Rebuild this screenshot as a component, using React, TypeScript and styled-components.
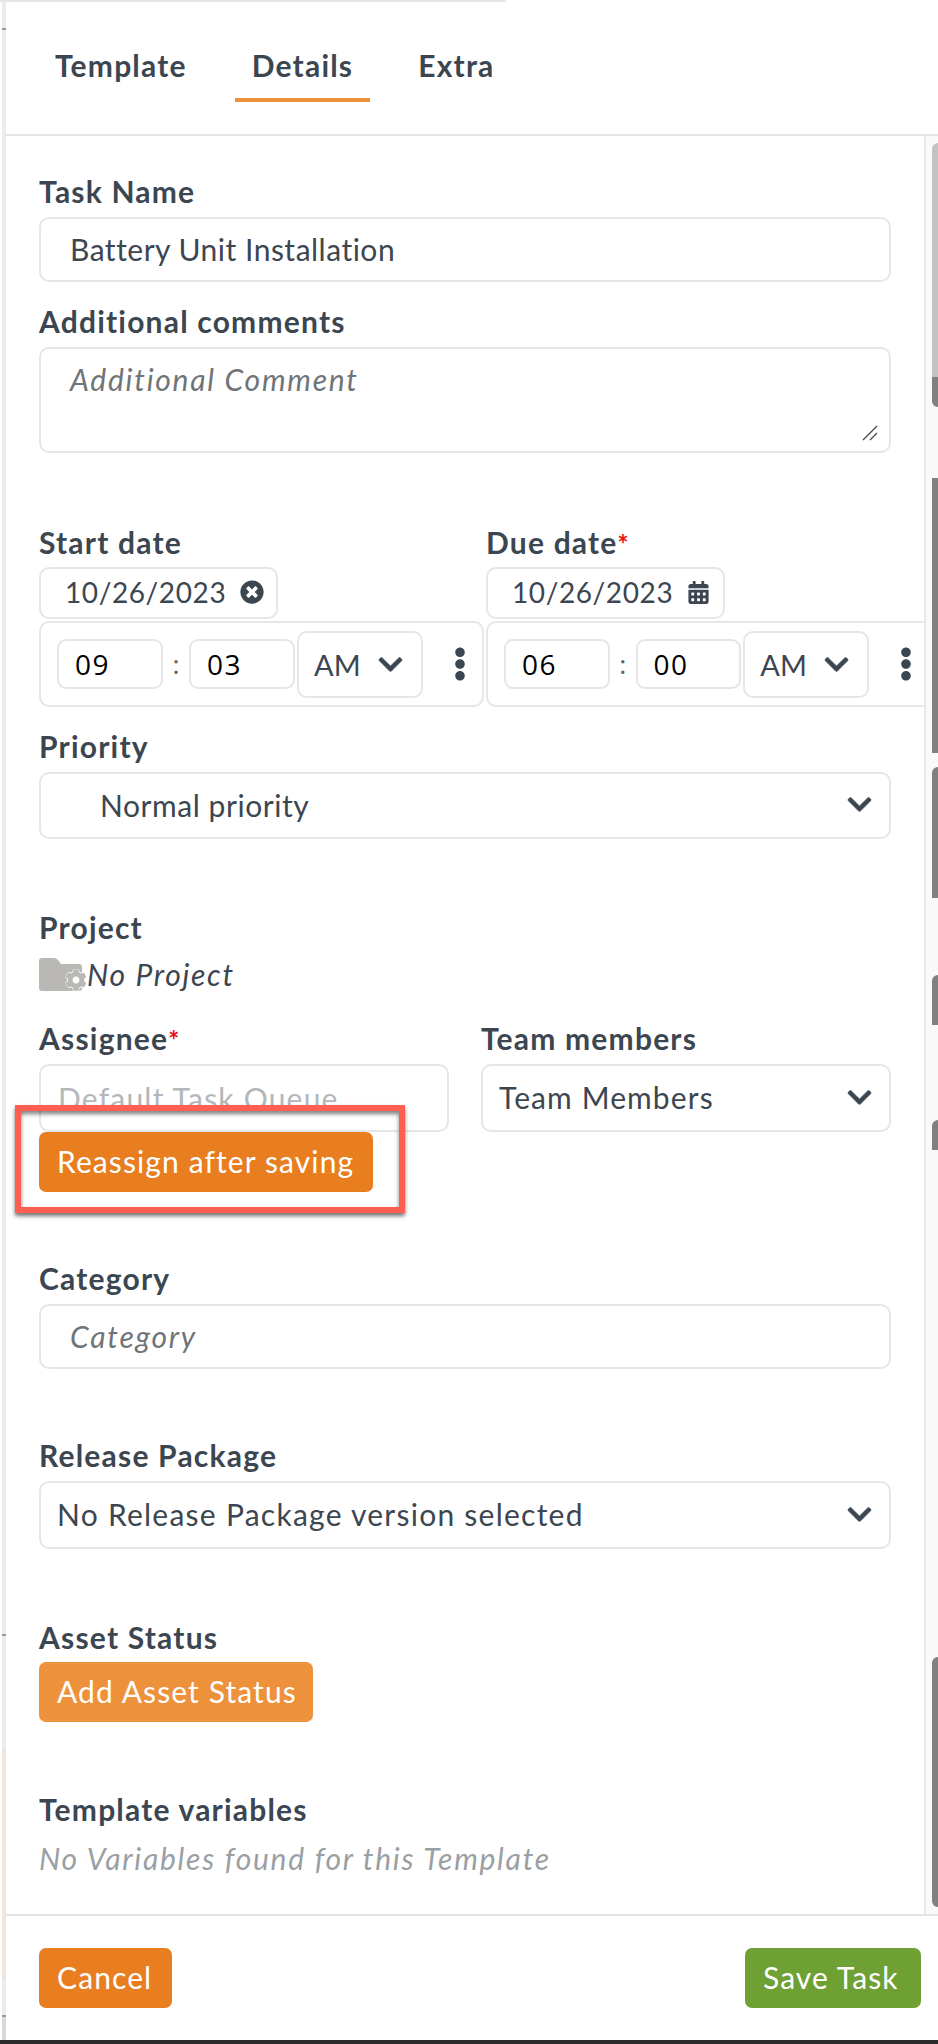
import React from "react"
import styled, {createGlobalStyle} from "styled-components"
import {FaCalendarAlt, FaChevronDown, FaCog, FaEllipsisV, FaTimesCircle} from "react-icons/fa"

const GlobalStyle = createGlobalStyle`
    html, body {
        margin: 0;
        padding: 0;
        background: #fff;
    }
    body {
        font-family: Lato, "Open Sans", sans-serif;
        color: #3c4650;
    }
`

const Page = styled.div`
    width: 938px;
    height: 2044px;
    display: flex;
    flex-direction: column;
    overflow: hidden;
`

const TopEdge = styled.div`
    width: 506px;
    height: 2px;
    flex: none;
    background: #e6e6e6;
`

const Content = styled.div`
    flex: 1;
    min-height: 0;
    display: flex;
`

const Rail = styled.div`
    width: 4px;
    flex: none;
    margin-left: 2px;
    display: flex;
    flex-direction: column;
`

const RailPiece = styled.div<{$height: number; $color: string}>`
    height: ${props => props.$height}px;
    flex: none;
    background: ${props => props.$color};
`

const Shell = styled.div`
    flex: 1;
    min-width: 0;
    display: flex;
    flex-direction: column;
`

const TabBar = styled.div`
    height: 132px;
    flex: none;
    display: flex;
    padding-left: 32px;
    border-bottom: 2px solid #e4e4e4;
`

const Tab = styled.div<{$active?: boolean}>`
    height: 100px;
    box-sizing: border-box;
    margin-right: 31px;
    padding: 43px 17px 0;
    font-size: 30px;
    line-height: 40px;
    font-weight: 700;
    letter-spacing: 1.2px;
    border-bottom: 4px solid ${props => (props.$active ? "#ee913b" : "transparent")};
`

const Middle = styled.div`
    flex: 1;
    display: flex;
    min-height: 0;
`

const Form = styled.div`
    flex: 1;
    min-width: 0;
    padding-left: 33px;
    overflow: hidden;
`

const Track = styled.div`
    width: 14px;
    flex: none;
    box-sizing: border-box;
    display: flex;
    flex-direction: column;
    align-items: flex-end;
    background: #f9f9f9;
    border-left: 2px solid #e8e8e8;
`

const Thumb = styled.div<{$top: number; $height: number; $radius: string; $light?: boolean}>`
    width: 6px;
    flex: none;
    margin-top: ${props => props.$top}px;
    height: ${props => props.$height}px;
    border-radius: ${props => props.$radius};
    background: ${props => (props.$light ? "linear-gradient(#c2c2c2 88.5%, #808080 88.5%)" : "#808080")};
`

const Label = styled.div<{$top: number}>`
    margin-top: ${props => props.$top}px;
    padding-bottom: 2px;
    font-size: 30px;
    line-height: 34px;
    font-weight: 700;
    letter-spacing: 1.2px;
    color: #3c4650;
`

const Required = styled.span`
    color: #e8120c;
    font-size: 26px;
    line-height: 0;
`

const Box = styled.div<{$width?: number; $height: number; $tracking?: number}>`
    box-sizing: border-box;
    width: ${props => props.$width ?? 852}px;
    height: ${props => props.$height}px;
    margin-top: 7px;
    display: flex;
    align-items: center;
    padding-bottom: 2px;
    border: 2px solid #e6e6e6;
    border-radius: 10px;
    background: #fff;
    font-size: 30px;
    letter-spacing: ${props => props.$tracking ?? 1.1}px;
    color: #3c4650;
`

const TextBox = styled(Box)`
    padding-left: 29px;
`

const Comment = styled(Box)`
    position: relative;
    align-items: flex-start;
    padding: 12px 0 0 29px;
`

const Placeholder = styled.span`
    font-style: italic;
    letter-spacing: 1.75px;
    color: #6f7478;
`

const Grip = styled.svg`
    position: absolute;
    right: 11px;
    bottom: 10px;
`

const DateRow = styled.div`
    display: flex;
`

const DateColumn = styled.div<{$width: number}>`
    flex: none;
    width: ${props => props.$width}px;
`

const DateBox = styled(Box)`
    margin-top: 6px;
    padding-left: 24px;
    gap: 14px;
    font-size: 28px;
`

const TimeBox = styled.div<{$open?: boolean}>`
    box-sizing: border-box;
    height: 86px;
    margin: 2px ${props => (props.$open ? 0 : 2)}px 0 0;
    display: flex;
    align-items: center;
    padding-left: 16px;
    border: 2px solid #e6e6e6;
    border-right-color: ${props => (props.$open ? "transparent" : "#e6e6e6")};
    border-radius: ${props => (props.$open ? "10px 0 0 10px" : "10px")};
`

const TimeInput = styled.div`
    box-sizing: border-box;
    width: 106px;
    height: 50px;
    padding-left: 16px;
    display: flex;
    align-items: center;
    border: 2px solid #e6e6e6;
    border-radius: 9px;
    font-family: "Open Sans", sans-serif;
    font-size: 28px;
    letter-spacing: 1.5px;
    color: #000;
`

const Colon = styled.span`
    width: 26px;
    text-align: center;
    font-size: 26px;
    color: #5e666d;
`

const Meridiem = styled.div`
    box-sizing: border-box;
    width: 126px;
    height: 67px;
    margin-left: 2px;
    padding: 0 17px 0 15px;
    display: flex;
    align-items: center;
    justify-content: space-between;
    border: 2px solid #e6e6e6;
    border-radius: 10px;
    font-size: 29px;
    color: #3c4650;
`

const MoreButton = styled.div`
    margin-left: 20px;
    display: flex;
    font-size: 34px;
    color: #3c4650;
`

const SelectBox = styled(Box)<{$inset?: number}>`
    justify-content: space-between;
    padding: 0 16px 2px ${props => props.$inset ?? 16}px;
`

const Arrow = styled(FaChevronDown)`
    flex: none;
    font-size: 27px;
    color: #3c4650;
    stroke: currentColor;
    stroke-width: 12px;
`

const ProjectRow = styled.div`
    margin-top: 11px;
    display: flex;
    align-items: center;
    height: 34px;
    font-size: 30px;
    font-style: italic;
    letter-spacing: 1.7px;
    color: #3c4650;
`

const FolderIcon = styled.span`
    position: relative;
    width: 48px;
    height: 33px;
    flex: none;
    display: block;
`

const FolderGear = styled(FaCog)`
    position: absolute;
    right: 0;
    bottom: 0;
    font-size: 22px;
    color: #b9b8b4;
    background: radial-gradient(circle, #fff 0 55%, transparent 60%);
    border-radius: 50%;
    stroke: #fff;
    stroke-width: 30px;
    paint-order: stroke;
`

const TeamRow = styled.div`
    display: flex;
    gap: 32px;
`

const TeamColumn = styled.div`
    flex: none;
    width: 410px;
`

const QueueBox = styled(Box)`
    align-items: flex-start;
    padding: 14px 0 0 17px;
`

const ClippedText = styled.span`
    display: block;
    height: 26px;
    overflow: hidden;
    line-height: 36px;
    letter-spacing: 1.2px;
    color: #b4b7ba;
`

const Reassign = styled.div`
    position: relative;
    width: 334px;
`

const Highlight = styled.div`
    position: absolute;
    left: -24px;
    top: -27px;
    width: 390px;
    height: 108px;
    box-sizing: border-box;
    border: 6px solid #ff5f52;
    box-shadow: 0 3px 4px rgba(0, 0, 0, 0.55), inset 0 3px 4px rgba(0, 0, 0, 0.5);
    pointer-events: none;
`

const Button = styled.div<{$color: string; $width: number}>`
    box-sizing: border-box;
    width: ${props => props.$width}px;
    height: 60px;
    flex: none;
    display: flex;
    align-items: center;
    padding: 0 0 2px 18px;
    border-radius: 7px;
    background: ${props => props.$color};
    color: #fff;
    font-size: 30px;
    letter-spacing: 1.1px;
`

const AssetButton = styled(Button)`
    margin-top: 6px;
`

const MutedNote = styled.div`
    margin-top: 12px;
    font-size: 30px;
    line-height: 36px;
    font-style: italic;
    letter-spacing: 1.75px;
    color: #9a9fa4;
`

const Footer = styled.div`
    height: 126px;
    flex: none;
    box-sizing: border-box;
    display: flex;
    justify-content: space-between;
    padding: 32px 17px 0 33px;
    border-top: 2px solid #e4e4e4;
`

const BottomEdge = styled.div`
    height: 4px;
    flex: none;
    background: #2c2c2c;
`

const railPieces = [
    {height: 26, color: "#ececec"},
    {height: 2, color: "#9a9a9a"},
    {height: 1604, color: "#ececec"},
    {height: 2, color: "#9a9a9a"},
    {height: 112, color: "#ececec"},
    {height: 232, color: "#efe7df"},
    {height: 35, color: "#ececec"},
    {height: 2, color: "#9a9a9a"},
    {height: 23, color: "#d9d9d9"},
]

export default function App() {
    return (
        <Page>
            <GlobalStyle />
            <TopEdge />
            <Content>
                <Rail>
                    {railPieces.map((piece, i) => (
                        <RailPiece key={i} $height={piece.height} $color={piece.color} />
                    ))}
                </Rail>
                <Shell>
                    <TabBar>
                        <Tab>Template</Tab>
                        <Tab $active>Details</Tab>
                        <Tab>Extra</Tab>
                    </TabBar>
                    <Middle>
                        <Form>
                            <Label $top={38}>Task Name</Label>
                            <TextBox $height={65} $tracking={0.5}>
                                Battery Unit Installation
                            </TextBox>
                            <Label $top={22}>Additional comments</Label>
                            <Comment $height={106}>
                                <Placeholder>Additional Comment</Placeholder>
                                <Grip width="16" height="16" viewBox="0 0 16 16">
                                    <path d="M1 15 15 1M8 15l7-7" stroke="#444" strokeWidth="1.2" fill="none" />
                                </Grip>
                            </Comment>
                            <DateRow>
                                <DateColumn $width={447}>
                                    <Label $top={72}>Start date</Label>
                                    <DateBox $width={239} $height={52} $tracking={0.6}>
                                        10/26/2023
                                        <FaTimesCircle size={24} />
                                    </DateBox>
                                    <TimeBox>
                                        <TimeInput>09</TimeInput>
                                        <Colon>:</Colon>
                                        <TimeInput>03</TimeInput>
                                        <Meridiem>
                                            AM
                                            <Arrow />
                                        </Meridiem>
                                        <MoreButton>
                                            <FaEllipsisV />
                                        </MoreButton>
                                    </TimeBox>
                                </DateColumn>
                                <DateColumn $width={439}>
                                    <Label $top={72}>
                                        Due date<Required>*</Required>
                                    </Label>
                                    <DateBox $width={239} $height={52} $tracking={0.6}>
                                        10/26/2023
                                        <FaCalendarAlt size={23} />
                                    </DateBox>
                                    <TimeBox $open>
                                        <TimeInput>06</TimeInput>
                                        <Colon>:</Colon>
                                        <TimeInput>00</TimeInput>
                                        <Meridiem>
                                            AM
                                            <Arrow />
                                        </Meridiem>
                                        <MoreButton>
                                            <FaEllipsisV />
                                        </MoreButton>
                                    </TimeBox>
                                </DateColumn>
                            </DateRow>
                            <Label $top={22}>Priority</Label>
                            <SelectBox $height={67} $inset={59} $tracking={0.55}>
                                Normal priority
                                <Arrow />
                            </SelectBox>
                            <Label $top={71}>Project</Label>
                            <ProjectRow>
                                <FolderIcon>
                                    <svg width="43" height="33" viewBox="0 0 43 33">
                                        <path
                                            d="M3 0h12c2 0 3 1 4 2l3 4h18c2 0 3 1 3 3v21c0 2-1 3-3 3H3c-2 0-3-1-3-3V3c0-2 1-3 3-3z"
                                            fill="#b9b8b4"
                                        />
                                    </svg>
                                    <FolderGear />
                                </FolderIcon>
                                No Project
                            </ProjectRow>
                            <TeamRow>
                                <TeamColumn>
                                    <Label $top={30}>
                                        Assignee<Required>*</Required>
                                    </Label>
                                    <QueueBox $width={410} $height={68}>
                                        <ClippedText>Default Task Queue</ClippedText>
                                    </QueueBox>
                                    <Reassign>
                                        <Button $color="#e87e1f" $width={334}>
                                            Reassign after saving
                                        </Button>
                                        <Highlight />
                                    </Reassign>
                                </TeamColumn>
                                <TeamColumn>
                                    <Label $top={30}>Team members</Label>
                                    <SelectBox $width={410} $height={68}>
                                        Team Members
                                        <Arrow />
                                    </SelectBox>
                                </TeamColumn>
                            </TeamRow>
                            <Label $top={69}>Category</Label>
                            <TextBox $height={65}>
                                <Placeholder>Category</Placeholder>
                            </TextBox>
                            <Label $top={69}>Release Package</Label>
                            <SelectBox $height={68} $tracking={1.25}>
                                No Release Package version selected
                                <Arrow />
                            </SelectBox>
                            <Label $top={71}>Asset Status</Label>
                            <AssetButton $color="#ee913b" $width={274}>
                                Add Asset Status
                            </AssetButton>
                            <Label $top={70}>Template variables</Label>
                            <MutedNote>No Variables found for this Template</MutedNote>
                        </Form>
                        <Track>
                            <Thumb $top={7} $height={264} $radius="9px 0 0 9px" $light />
                            <Thumb $top={71} $height={275} $radius="0" />
                            <Thumb $top={14} $height={131} $radius="9px 0 0 0" />
                            <Thumb $top={77} $height={50} $radius="9px 0 0 0" />
                            <Thumb $top={95} $height={30} $radius="9px 0 0 0" />
                            <Thumb $top={507} $height={250} $radius="9px 0 0 9px" />
                        </Track>
                    </Middle>
                    <Footer>
                        <Button $color="#e87e1f" $width={133}>
                            Cancel
                        </Button>
                        <Button $color="#6fa033" $width={176}>
                            Save Task
                        </Button>
                    </Footer>
                </Shell>
            </Content>
            <BottomEdge />
        </Page>
    )
}
